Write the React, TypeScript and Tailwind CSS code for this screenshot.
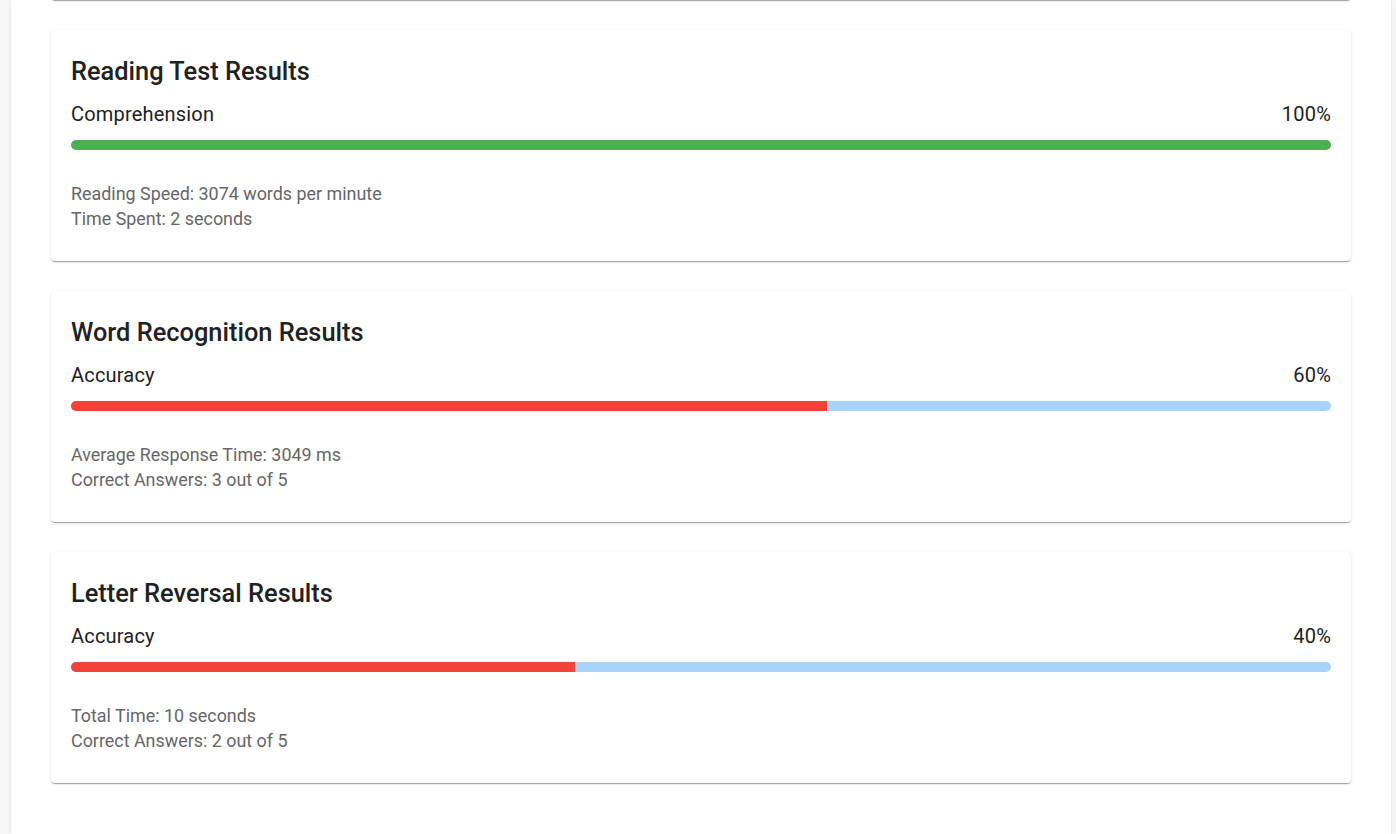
interface Stat {
  label: string;
  value: number;
}

interface Result {
  id: string;
  title: string;
  metric: Stat;
  details: string[];
}

const results: Result[] = [
  {
    id: "reading",
    title: "Reading Test Results",
    metric: { label: "Comprehension", value: 100 },
    details: ["Reading Speed: 3074 words per minute", "Time Spent: 2 seconds"],
  },
  {
    id: "words",
    title: "Word Recognition Results",
    metric: { label: "Accuracy", value: 60 },
    details: ["Average Response Time: 3049 ms", "Correct Answers: 3 out of 5"],
  },
  {
    id: "letters",
    title: "Letter Reversal Results",
    metric: { label: "Accuracy", value: 40 },
    details: ["Total Time: 10 seconds", "Correct Answers: 2 out of 5"],
  },
];

const cardShadow =
  "shadow-[0px_2px_1px_-1px_rgba(0,0,0,0.2),0px_1px_1px_0px_rgba(0,0,0,0.14),0px_1px_3px_0px_rgba(0,0,0,0.12)]";

function ResultCard({ result }: { result: Result }) {
  const good = result.metric.value >= 70;
  return (
    <div className={`bg-white rounded ${cardShadow} px-5 pt-[25px] pb-[30px]`}>
      <h2 className="text-[25.4px] leading-[32px] font-medium text-[#212121] mb-[13px]">{result.title}</h2>
      <div className="flex justify-between items-center text-[20px] leading-[28px] tracking-[0.00938em] text-[#212121] mb-[12px]">
        <span>{result.metric.label}</span>
        <span>{result.metric.value}%</span>
      </div>
      <div className="h-[10px] rounded-[5px] bg-[#a8d4fa] overflow-hidden">
        <div
          className={good ? "h-full bg-[#4caf50]" : "h-full bg-[#f44336]"}
          style={{ width: `${result.metric.value}%` }}
        />
      </div>
      <div className="mt-[31px] text-[17.9px] leading-[25px] text-[#666666]">
        {result.details.map((line, i) => (
          <p key={i}>{line}</p>
        ))}
      </div>
    </div>
  );
}

export default function App() {
  return (
    <div
      className="min-h-screen h-[834px] overflow-hidden bg-[#f5f5f5]"
      style={{ fontFamily: "Roboto, 'Liberation Sans', sans-serif" }}
    >
      <div className="ml-[11px] w-[1380px] h-full bg-white shadow-[0_0_2px_rgba(0,0,0,0.12)]">
        <div className="px-10 flex flex-col gap-[30px]">
          {/* bottom edge of the card above the fold */}
          <div className={`-mt-[100px] h-[100px] bg-white rounded ${cardShadow}`} />
          {results.map((r) => (
            <ResultCard key={r.id} result={r} />
          ))}
        </div>
      </div>
    </div>
  );
}
